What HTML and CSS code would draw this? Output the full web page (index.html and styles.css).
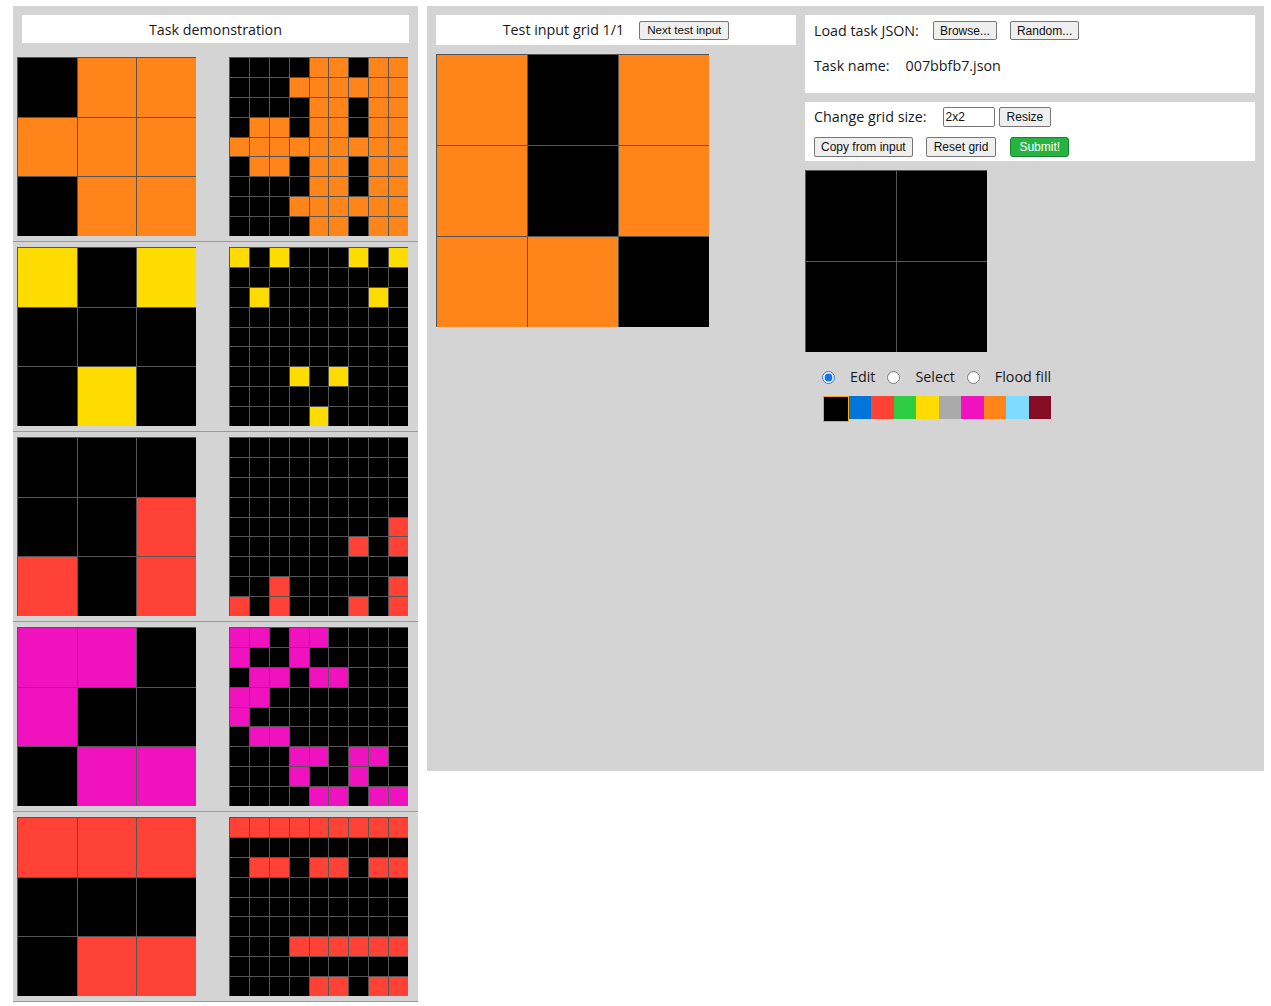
FILE: index.html
```html
<!DOCTYPE html>
<html lang="en">
<head>
<meta charset="utf-8">
<title>ARC testing interface</title>
<link rel="stylesheet" href="styles.css">
</head>
<body>
<div class="app">
  <section class="demo">
    <div class="panel-header">Task demonstration</div>
    <div class="pair"><div class="grid g3 demo-grid" data-grid="in0"></div><div class="grid g9 demo-grid" data-grid="out0"></div></div>
    <div class="pair"><div class="grid g3 demo-grid" data-grid="in1"></div><div class="grid g9 demo-grid" data-grid="out1"></div></div>
    <div class="pair"><div class="grid g3 demo-grid" data-grid="in2"></div><div class="grid g9 demo-grid" data-grid="out2"></div></div>
    <div class="pair"><div class="grid g3 demo-grid" data-grid="in3"></div><div class="grid g9 demo-grid" data-grid="out3"></div></div>
    <div class="pair"><div class="grid g3 demo-grid" data-grid="in4"></div><div class="grid g9 demo-grid" data-grid="out4"></div></div>
  </section>

  <section class="workspace">
    <div class="test-col">
      <div class="test-header">
        <span>Test input grid 1/1</span>
        <button class="btn btn-small">Next test input</button>
      </div>
      <div class="grid g3 test-grid" data-grid="test"></div>
    </div>

    <div class="edit-col">
      <div class="box box-load">
        <div class="row">
          <span>Load task JSON:</span>
          <button class="btn btn-browse">Browse...</button>
          <button class="btn btn-random">Random...</button>
        </div>
        <div class="row task-row">
          <span>Task name:</span>
          <span class="task-name">007bbfb7.json</span>
        </div>
      </div>

      <div class="box box-tools">
        <div class="row">
          <span>Change grid size:</span>
          <input class="size-input" type="text" value="2x2">
          <button class="btn btn-resize">Resize</button>
        </div>
        <div class="row row-actions">
          <button class="btn">Copy from input</button>
          <button class="btn btn-gap btn-reset">Reset grid</button>
          <button class="btn btn-gap btn-submit">Submit!</button>
        </div>
      </div>

      <div class="grid g2 out-grid" data-grid="output"></div>

      <div class="modes">
        <input class="radio" type="radio" name="mode" id="m-edit" checked>
        <label class="mode-label" for="m-edit">Edit</label>
        <input class="radio" type="radio" name="mode" id="m-select">
        <label class="mode-label" for="m-select">Select</label>
        <input class="radio" type="radio" name="mode" id="m-fill">
        <label class="mode-label" for="m-fill">Flood fill</label>
      </div>

      <div class="palette">
        <div class="swatch c0 selected"></div>
        <div class="swatch c1"></div>
        <div class="swatch c2"></div>
        <div class="swatch c3"></div>
        <div class="swatch c4"></div>
        <div class="swatch c5"></div>
        <div class="swatch c6"></div>
        <div class="swatch c7"></div>
        <div class="swatch c8"></div>
        <div class="swatch c9"></div>
      </div>
    </div>
  </section>
</div>
<script src="script.js"></script>
</body>
</html>
```

FILE: styles.css
```css
html, body {
  margin: 0;
  padding: 0;
  background: #ffffff;
}

body {
  font-family: "Open Sans", "DejaVu Sans", sans-serif;
  font-size: 14.3px;
  color: #1a1a1a;
}

.app {
  display: flex;
  align-items: flex-start;
  gap: 9px;
  padding: 6px 0 0 13px;
}

/* ---------- demonstration panel ---------- */
.demo {
  width: 405px;
  background: #d4d4d4;
  padding-top: 9px;
}

.panel-header {
  margin: 0 9px 9px;
  height: 28px;
  box-sizing: border-box;
  padding-top: 1px;
  background: #ffffff;
  display: flex;
  align-items: center;
  justify-content: center;
  line-height: 20px;
}

.pair {
  display: flex;
  gap: 33px;
  padding: 5px 0 5px 4px;
  border-bottom: 1px solid #999999;
}

/* ---------- grids ---------- */
.grid {
  display: grid;
}

.g2 { grid-template-columns: repeat(2, 1fr); grid-template-rows: repeat(2, 1fr); }
.g3 { grid-template-columns: repeat(3, 1fr); grid-template-rows: repeat(3, 1fr); }
.g9 { grid-template-columns: repeat(9, 1fr); grid-template-rows: repeat(9, 1fr); }

.demo-grid { width: 179px; height: 179px; }
.test-grid { width: 273px; height: 273px; }
.out-grid  { width: 182px; height: 182px; margin-top: 9px; }

.cell {
  box-sizing: border-box;
  border-top: 1px solid #555555;
  border-left: 1px solid #555555;
}

.c0 { background: #000000; }
.c1 { background: #0074d9; }
.c2 { background: #ff4136; }
.c3 { background: #2ecc40; }
.c4 { background: #ffdc00; }
.c5 { background: #aaaaaa; }
.c6 { background: #f012be; }
.c7 { background: #ff851b; }
.c8 { background: #7fdbff; }
.c9 { background: #870c25; }

/* ---------- workspace ---------- */
.workspace {
  width: 837px;
  height: 765px;
  box-sizing: border-box;
  padding: 9px;
  background: #d4d4d4;
  display: flex;
  gap: 9px;
}

.test-col {
  width: 360px;
  display: flex;
  flex-direction: column;
  gap: 9px;
}

.test-header {
  height: 30px;
  background: #ffffff;
  display: flex;
  align-items: center;
  justify-content: center;
  gap: 15px;
  line-height: 20px;
}

.edit-col {
  width: 450px;
  display: flex;
  flex-direction: column;
}

.box {
  background: #ffffff;
  box-sizing: border-box;
  padding: 0 9px;
}

.box-load {
  height: 78px;
  padding-top: 6px;
}

.box-tools {
  height: 59px;
  margin-top: 9px;
  padding-top: 5px;
}

.row {
  display: flex;
  align-items: center;
  height: 19px;
  line-height: 20px;
}

.box-tools .row {
  height: 20px;
}

.task-row {
  margin-top: 16px;
  height: 20px;
}

.task-name {
  margin-left: 16px;
}

.row-actions {
  margin-top: 10px;
}

/* ---------- buttons / inputs ---------- */
.btn {
  font-family: "Liberation Sans", Arial, sans-serif;
  font-size: 12px;
  line-height: 14px;
  color: #111111;
  background: #efefef;
  border: 1px solid #767676;
  border-radius: 2px;
  padding: 0 6px;
  height: 20px;
  margin: 0;
  box-sizing: border-box;
}

.btn-small {
  font-size: 11.6px;
  padding: 0 7px;
  height: 19px;
}

.btn-browse {
  margin-left: 14px;
  height: 19px;
}

.btn-random {
  margin-left: 13px;
  padding: 0 6px;
  height: 19px;
}

.btn-resize {
  margin-left: 4px;
  padding: 0 7px;
}

.btn-gap {
  margin-left: 13px;
}

.btn-reset {
  padding: 0 7px;
}

.btn-submit {
  margin-left: 14px;
  background: #27b340;
  border-color: #1c7f2d;
  color: #ffffff;
  border-radius: 3px;
  padding: 0 8px;
}

.size-input {
  margin: 0 0 0 16px;
  width: 52px;
  height: 20px;
  box-sizing: border-box;
  padding: 0 2px;
  border: 1px solid #767676;
  border-radius: 2px;
  font-family: "Liberation Sans", Arial, sans-serif;
  font-size: 12px;
  color: #111111;
}

/* ---------- modes ---------- */
.modes {
  display: flex;
  align-items: center;
  margin-top: 18px;
  padding-left: 17px;
  height: 14px;
  line-height: 20px;
}

.radio {
  width: 13px;
  height: 13px;
  margin: 0;
  accent-color: #1a73e8;
}

.mode-label {
  margin-left: 15px;
  margin-right: 12px;
}

/* ---------- palette ---------- */
.palette {
  display: flex;
  align-items: flex-start;
  margin-top: 12px;
  margin-left: 18px;
}

.swatch {
  width: 22.45px;
  height: 23px;
}

.swatch.selected {
  width: 26px;
  height: 26px;
  box-sizing: border-box;
  border: 1px solid #ffa500;
}
```

FILE: script.js
```js
(function () {
  var inputs = [
    [[0,7,7],[7,7,7],[0,7,7]],
    [[4,0,4],[0,0,0],[0,4,0]],
    [[0,0,0],[0,0,2],[2,0,2]],
    [[6,6,0],[6,0,0],[0,6,6]],
    [[2,2,2],[0,0,0],[0,2,2]]
  ];

  function expand(g) {
    var n = g.length, out = [];
    for (var r = 0; r < n * n; r++) {
      var row = [];
      for (var c = 0; c < n * n; c++) {
        var outer = g[Math.floor(r / n)][Math.floor(c / n)];
        row.push(outer !== 0 ? g[r % n][c % n] : 0);
      }
      out.push(row);
    }
    return out;
  }

  var data = {
    test: [[7,0,7],[7,0,7],[7,7,0]],
    output: [[0,0],[0,0]]
  };
  inputs.forEach(function (g, i) {
    data['in' + i] = g;
    data['out' + i] = expand(g);
  });

  var els = document.querySelectorAll('[data-grid]');
  Array.prototype.forEach.call(els, function (el) {
    var g = data[el.getAttribute('data-grid')];
    var frag = document.createDocumentFragment();
    g.forEach(function (row) {
      row.forEach(function (v) {
        var d = document.createElement('div');
        d.className = 'cell c' + v;
        frag.appendChild(d);
      });
    });
    el.appendChild(frag);
  });
})();
```
